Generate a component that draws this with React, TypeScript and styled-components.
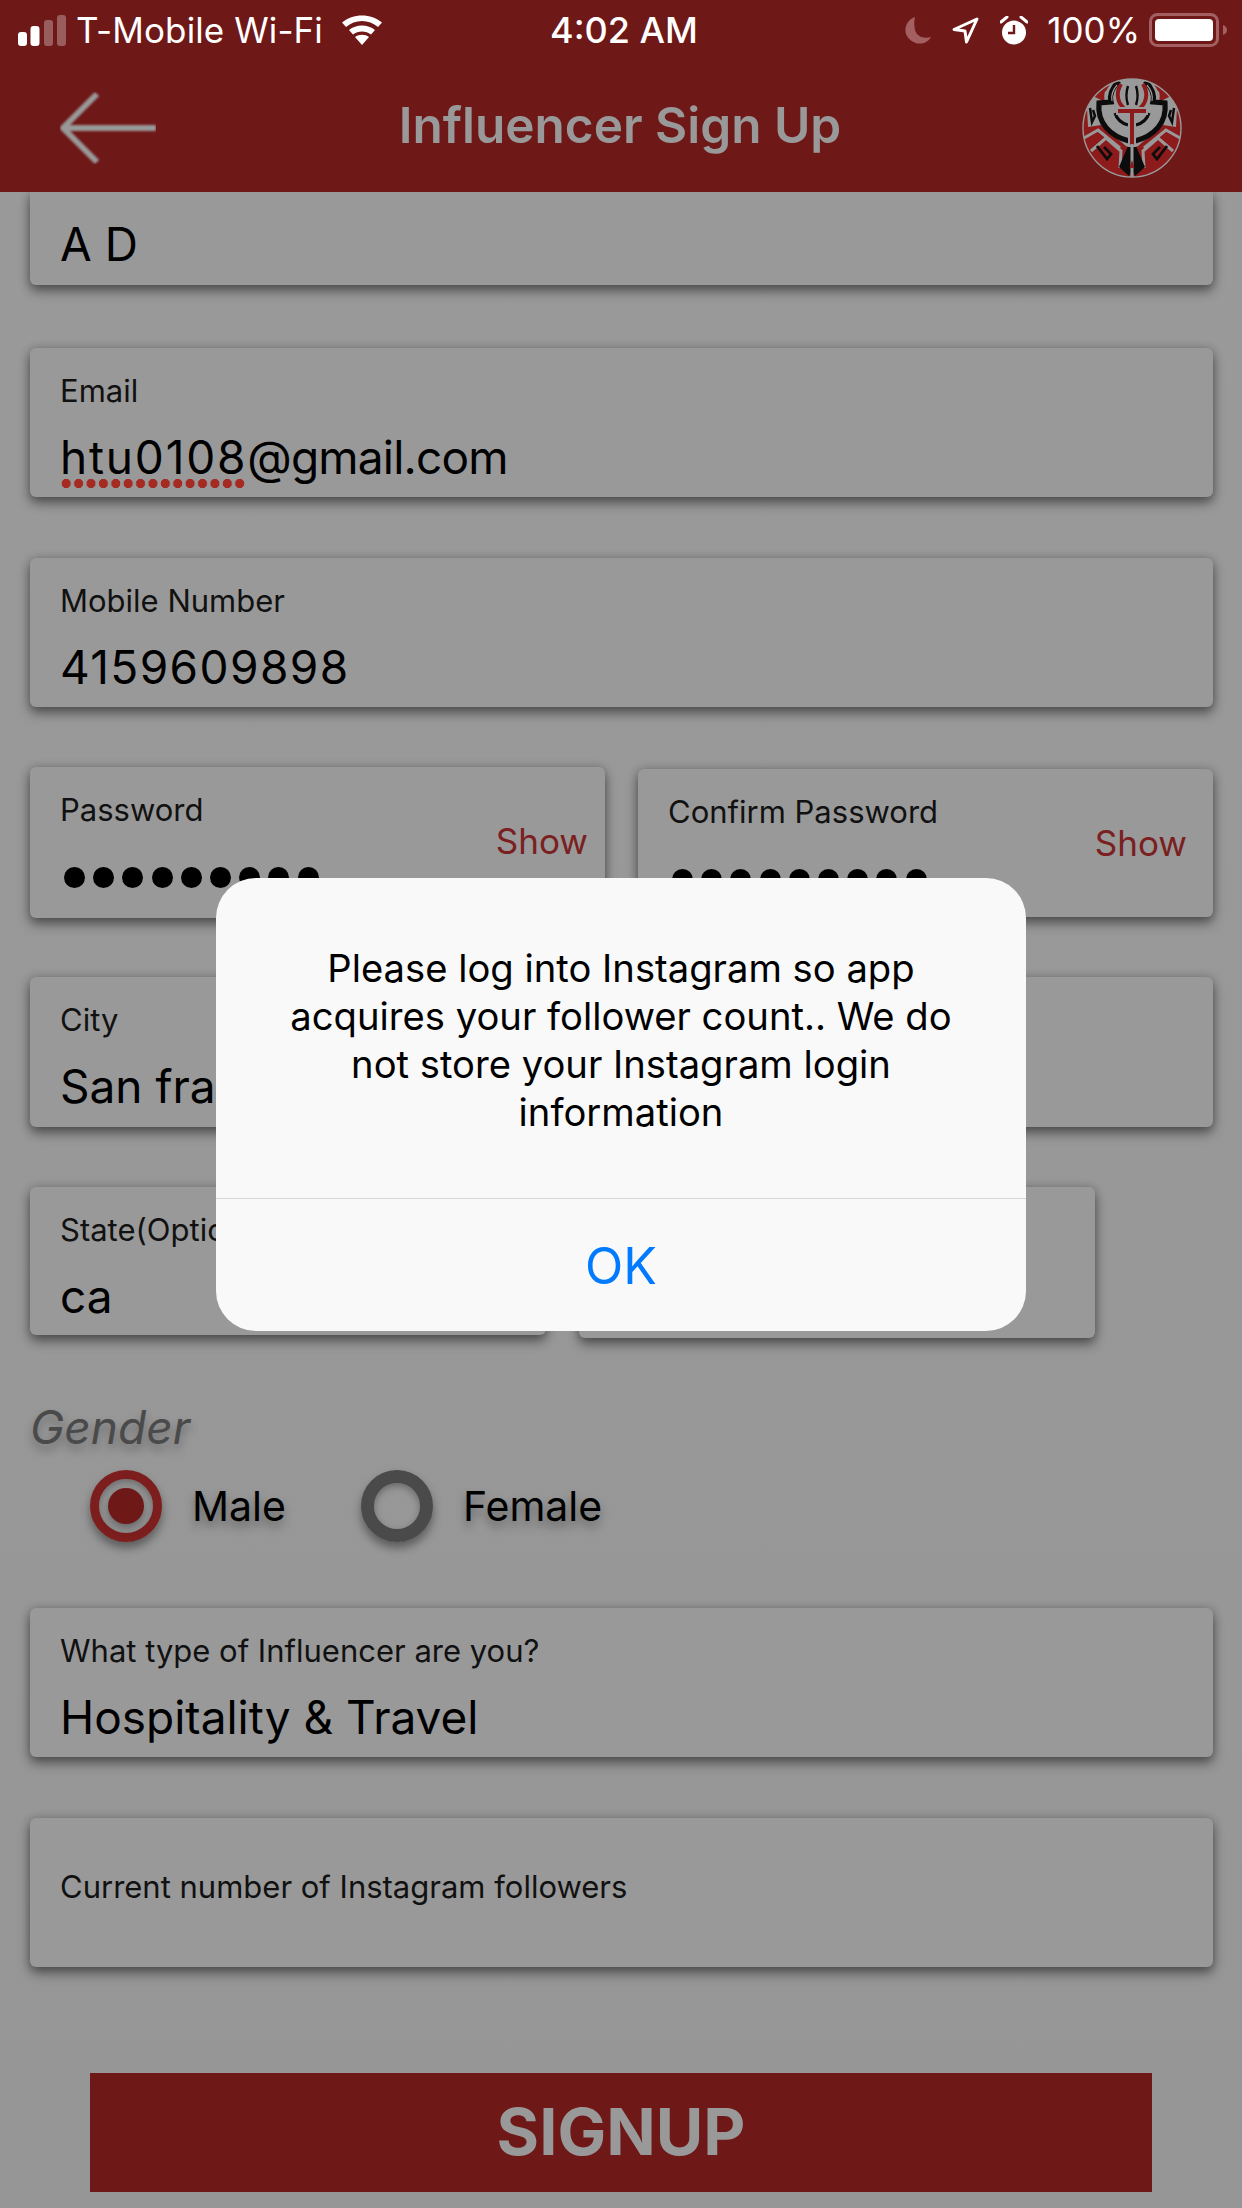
import React from "react";
import styled, { createGlobalStyle } from "styled-components";

const Global = createGlobalStyle`
  html, body { margin: 0; padding: 0; background: #979797; }
  * { box-sizing: border-box; }
`;

const Page = styled.div`
  position: relative;
  width: 1242px;
  height: 2208px;
  overflow: hidden;
  background: linear-gradient(#9a9a9a, #969696);
  font-family: Inter, "Noto Sans", "Liberation Sans", sans-serif;
  color: #000;
  display: flex;
  flex-direction: column;
`;

const Header = styled.header`
  position: relative;
  z-index: 2;
  height: 192px;
  flex: none;
  background: #6f1818;
  display: flex;
  flex-direction: column;
`;

const StatusBar = styled.div`
  height: 60px;
  flex: none;
  display: grid;
  grid-template-columns: 1fr auto 1fr;
  align-items: center;
  color: #fff;
  font-size: 35px;
`;

const StatusLeft = styled.div`
  display: flex;
  align-items: center;
  padding-left: 18px;
`;

const StatusRight = styled.div`
  display: flex;
  align-items: center;
  justify-content: flex-end;
  padding-right: 15px;
`;

const Carrier = styled.span`
  margin-left: 10px;
  letter-spacing: 0.1px;
`;

const Clock = styled.span`
  font-weight: 500;
  font-size: 36px;
  margin-left: 6px;
`;

const Battery = styled.span`
  margin: 0 9px 0 19px;
`;

const NavBar = styled.div`
  flex: 1;
  display: flex;
  align-items: center;
  justify-content: space-between;
  padding: 4px 60px 0 60px;
`;

const Title = styled.h1`
  margin: 0 0 6px 2px;
  font-size: 49.5px;
  font-weight: 600;
  color: #999;
`;

const Form = styled.main`
  flex: 1;
  display: flex;
  flex-direction: column;
  padding: 0 29px 0 30px;
`;

const Row = styled.div<{ $top: number }>`
  display: flex;
  gap: 33px;
  margin-top: ${(p) => p.$top}px;
`;

const Card = styled.div<{ $h?: number; $w?: number; $first?: boolean; $pr?: number; $mt?: number }>`
  flex: ${(p) => (p.$w ? "none" : "1")};
  width: ${(p) => (p.$w ? `${p.$w}px` : "auto")};
  height: ${(p) => p.$h ?? 149}px;
  margin-top: ${(p) => p.$mt ?? 0}px;
  background: #999;
  border-radius: ${(p) => (p.$first ? "0 0 6px 6px" : "6px")};
  box-shadow: 0 6px 12px rgba(0, 0, 0, 0.45), 0 0 10px rgba(0, 0, 0, 0.18);
  padding: 0 ${(p) => p.$pr ?? 30}px 0 30px;
  display: flex;
  align-items: center;
  justify-content: space-between;
`;

const FieldBody = styled.div`
  display: flex;
  flex-direction: column;
  align-self: flex-start;
  padding-top: 24px;
`;

const Label = styled.label`
  font-size: 31px;
  line-height: 38px;
  color: #111;
  white-space: nowrap;
`;

const Value = styled.div<{ $track?: number; $flush?: boolean }>`
  font-size: 46px;
  line-height: 56px;
  margin-top: ${(p) => (p.$flush ? 0 : 19)}px;
  letter-spacing: ${(p) => p.$track ?? 0}px;
  white-space: nowrap;
`;

const Misspelled = styled.span`
  position: relative;
  letter-spacing: 1.8px;
  &::after {
    content: "";
    position: absolute;
    left: 0;
    right: 0;
    bottom: -3px;
    height: 9px;
    background: radial-gradient(circle at center, #a52a22 4.4px, transparent 4.9px) repeat-x 0 0 / 12.4px 9px;
  }
`;

const Dots = styled.div`
  display: flex;
  gap: 8.2px;
  margin: 38px 0 0 4px;
`;

const Dot = styled.i`
  display: block;
  width: 21px;
  height: 21px;
  border-radius: 50%;
  background: #000;
`;

const ShowLink = styled.span<{ $lift?: number }>`
  font-size: 35px;
  color: #7a2020;
  margin-bottom: ${(p) => p.$lift ?? 0}px;
`;

const HelpLabel = styled(Label)`
  align-self: center;
  margin-bottom: 12px;
`;

const GenderTitle = styled.div`
  margin-top: 61px;
  font-size: 46px;
  line-height: 56px;
  font-style: italic;
  color: #4a4a4a;
  text-shadow: 0 6px 10px rgba(0, 0, 0, 0.3);
`;

const GenderRow = styled.div`
  display: flex;
  align-items: center;
  margin: 15px 0 0 60px;
`;

const Radio = styled.span<{ $on?: boolean }>`
  width: 72px;
  height: 72px;
  flex: none;
  border-radius: 50%;
  border: ${(p) => (p.$on ? "9px solid #7c1e1e" : "13px solid #4a4a4a")};
  box-shadow: 0 6px 10px rgba(0, 0, 0, 0.4), inset 0 3px 7px rgba(0, 0, 0, 0.3);
  display: flex;
  align-items: center;
  justify-content: center;
  &::after {
    content: "";
    display: ${(p) => (p.$on ? "block" : "none")};
    width: 36px;
    height: 36px;
    border-radius: 50%;
    background: #6f1818;
    box-shadow: 0 4px 8px rgba(0, 0, 0, 0.35);
  }
`;

const RadioText = styled.span<{ $gap?: number }>`
  font-size: 41px;
  margin: 0 ${(p) => p.$gap ?? 0}px 0 30px;
  text-shadow: 0 6px 10px rgba(0, 0, 0, 0.35);
`;

const SignupButton = styled.button`
  flex: none;
  width: 1062px;
  height: 119px;
  margin: 106px 0 0 60px;
  border: 0;
  padding: 0 0 3px;
  background: #6f1818;
  color: #999;
  font-family: inherit;
  font-size: 65px;
  font-weight: 700;
`;

const Overlay = styled.div`
  position: absolute;
  inset: 0;
  z-index: 3;
  display: flex;
  align-items: center;
  justify-content: center;
`;

const Alert = styled.div`
  width: 810px;
  height: 453px;
  border-radius: 40px;
  background: #f9f9f9;
  display: flex;
  flex-direction: column;
`;

const Message = styled.p`
  flex: none;
  height: 321px;
  margin: 0;
  padding: 66px 60px 0;
  text-align: center;
  font-size: 38.2px;
  line-height: 48px;
  color: #000;
  border-bottom: 1px solid #d6d6d6;
`;

const OkButton = styled.button`
  flex: 1;
  border: 0;
  background: transparent;
  color: #007aff;
  font-family: inherit;
  font-size: 50px;
  padding: 2px 0 0;
`;

const Icon = styled.svg<{ $ml?: number }>`
  display: block;
  flex: none;
  margin-left: ${(p) => p.$ml ?? 0}px;
`;

const SignalIcon = () => (
  <Icon width="48" height="32" viewBox="0 0 48 32">
    <rect x="0" y="18" width="9" height="14" rx="3" fill="#fff" />
    <rect x="12.5" y="12" width="9" height="20" rx="3" fill="#fff" />
    <rect x="26" y="6" width="9" height="26" rx="3" fill="#fff" fillOpacity=".3" />
    <rect x="39" y="1" width="9" height="31" rx="3" fill="#fff" fillOpacity=".3" />
  </Icon>
);

const WifiIcon = () => (
  <Icon $ml={19} width="40" height="30" viewBox="0 0 40 30">
    <path d="M20 30l-7-8c4-3 10-3 14 0z" fill="#fff" />
    <path d="M7 15l4 4.5c5-4 13-4 18 0l4-4.5C26 9 14 9 7 15z" fill="#fff" />
    <path d="M0 7.5l4 4.5C13 4 27 4 36 12l4-4.5C29-2 11-2 0 7.5z" fill="#fff" />
  </Icon>
);

const MoonIcon = () => (
  <Icon width="27" height="27" viewBox="0 0 27 27">
    <path d="M10 0C2 3-1 11 1 17c3 8 13 12 20 8 2-1 4-3 5-5-7 2-14 0-16-7C9 8 9 4 10 0z" fill="#a45f61" />
  </Icon>
);

const LocationIcon = () => (
  <Icon $ml={20} width="27" height="27" viewBox="0 0 27 27">
    <path d="M25 2L2 12.5l11 1.5 1.5 11z" fill="none" stroke="#fff" strokeWidth="3" strokeLinejoin="round" />
  </Icon>
);

const AlarmIcon = () => (
  <Icon $ml={21} width="28" height="29" viewBox="0 0 28 29">
    <circle cx="14" cy="16.5" r="12" fill="#fff" />
    <path d="M14 9v8H8" fill="none" stroke="#6f1818" strokeWidth="2.4" />
    <path d="M1 6l6-5M27 6l-6-5" stroke="#fff" strokeWidth="3" strokeLinecap="round" />
  </Icon>
);

const BatteryIcon = () => (
  <Icon width="78" height="34" viewBox="0 0 78 34">
    <rect x="1.5" y="1.5" width="67" height="31" rx="7" fill="none" stroke="#a45f61" strokeWidth="3" />
    <rect x="6" y="6" width="58" height="22" rx="4" fill="#fff" />
    <path d="M74 12c3 1 4 3 4 5s-1 4-4 5z" fill="#a45f61" />
  </Icon>
);

const BackArrow = () => (
  <Icon width="96" height="72" viewBox="0 0 96 72">
    <path
      d="M96 36H3M37 2L3 36l34 34"
      fill="none"
      stroke="#999"
      strokeWidth="6"
      strokeLinejoin="round"
      style={{ filter: "blur(0.8px)" }}
    />
  </Icon>
);

const LOGO_RED = "#8e1b1b";
const LOGO_GREY = "#999";
const LOGO_BLACK = "#0c0c0c";

const LogoHalf = () => (
  <g fill="none">
    <path d="M50 0L30 3 24 13 10 20 5 30 6 49 19 47 44 68 50 72z" fill={LOGO_GREY} />
    <path d="M30 4C21 7 15 11 11 18L23 24C21 16 23 10 30 4z" fill={LOGO_RED} />
    <path d="M37 3C30 10 27 16 29 24L17 25C15 45 28 58 47 63" stroke={LOGO_BLACK} strokeWidth="5.2" />
    <path d="M35 7C30 13 29 18 30 23" stroke={LOGO_GREY} strokeWidth="1.2" />
    <path d="M33 35C35 42 39 45 46 47" stroke={LOGO_BLACK} strokeWidth="3" />
    <path d="M39 6C33 16 36 26 43 31" stroke={LOGO_RED} strokeWidth="4" />
    <path d="M8 30L10 44 13 38 11 32" stroke={LOGO_BLACK} strokeWidth="2.5" />
    <path d="M2 60L16 52 38 70" stroke={LOGO_GREY} strokeWidth="3" />
    <path d="M9 73L24 60 39 73 38 90" stroke={LOGO_GREY} strokeWidth="3" />
    <path d="M15 68L25 81 29 76 22 69" stroke={LOGO_BLACK} strokeWidth="2.8" />
    <path d="M46 68L37 89 47 98 50 92V68z" fill={LOGO_BLACK} />
  </g>
);

const Logo = () => (
  <Icon width="100" height="100" viewBox="0 0 100 100">
    <defs>
      <clipPath id="logo-disc">
        <circle cx="50" cy="50" r="49" />
      </clipPath>
    </defs>
    <circle cx="50" cy="50" r="49" fill={LOGO_RED} />
    <g clipPath="url(#logo-disc)">
      <LogoHalf />
      <g transform="translate(100 0) scale(-1 1)">
        <LogoHalf />
      </g>
      <path d="M50 1c-11 8-11 20-6 30h12c5-10 5-22-6-30z" fill={LOGO_GREY} />
      <path d="M46 8c-2 6-2 13 0 19M54 8c2 6 2 13 0 19" stroke={LOGO_BLACK} strokeWidth="2.4" fill="none" />
      <path d="M34 29h32v8H54v32h-8V37H34z" fill={LOGO_GREY} />
      <path d="M36 31h28v4H52v32h-4V35H36z" fill={LOGO_RED} />
      <path d="M50 66v33" stroke={LOGO_GREY} strokeWidth="3" />
      <path d="M50 82l-2.5 8h5z" fill={LOGO_RED} />
    </g>
    <circle cx="50" cy="50" r="49" fill="none" stroke={LOGO_GREY} strokeWidth="1.4" />
  </Icon>
);

const PasswordDots = () => (
  <Dots>
    {Array.from({ length: 9 }, (_, i) => (
      <Dot key={i} />
    ))}
  </Dots>
);

export default function App() {
  return (
    <Page>
      <Global />
      <Header>
        <StatusBar>
          <StatusLeft>
            <SignalIcon />
            <Carrier>T-Mobile Wi-Fi</Carrier>
            <WifiIcon />
          </StatusLeft>
          <Clock>4:02 AM</Clock>
          <StatusRight>
            <MoonIcon />
            <LocationIcon />
            <AlarmIcon />
            <Battery>100%</Battery>
            <BatteryIcon />
          </StatusRight>
        </StatusBar>
        <NavBar>
          <BackArrow />
          <Title>Influencer Sign Up</Title>
          <Logo />
        </NavBar>
      </Header>
      <Form>
        <Row $top={0}>
          <Card $first $h={93}>
            <FieldBody>
              <Value $flush>A D</Value>
            </FieldBody>
          </Card>
        </Row>
        <Row $top={63}>
          <Card>
            <FieldBody>
              <Label>Email</Label>
              <Value $track={-0.8}>
                <Misspelled>htu0108</Misspelled>@gmail.com
              </Value>
            </FieldBody>
          </Card>
        </Row>
        <Row $top={61}>
          <Card>
            <FieldBody>
              <Label>Mobile Number</Label>
              <Value $track={1.4}>4159609898</Value>
            </FieldBody>
          </Card>
        </Row>
        <Row $top={60}>
          <Card $w={575} $h={151} $pr={17}>
            <FieldBody>
              <Label>Password</Label>
              <PasswordDots />
            </FieldBody>
            <ShowLink $lift={3}>Show</ShowLink>
          </Card>
          <Card $w={575} $h={148} $pr={26} $mt={2}>
            <FieldBody>
              <Label>Confirm Password</Label>
              <PasswordDots />
            </FieldBody>
            <ShowLink>Show</ShowLink>
          </Card>
        </Row>
        <Row $top={59}>
          <Card $h={150}>
            <FieldBody>
              <Label>City</Label>
              <Value>San francisco</Value>
            </FieldBody>
          </Card>
        </Row>
        <Row $top={60}>
          <Card $w={516} $h={148}>
            <FieldBody>
              <Label>State(Optional)</Label>
              <Value>ca</Value>
            </FieldBody>
          </Card>
          <Card $w={516} $h={151} />
        </Row>
        <GenderTitle>Gender</GenderTitle>
        <GenderRow>
          <Radio $on />
          <RadioText $gap={75}>Male</RadioText>
          <Radio />
          <RadioText>Female</RadioText>
        </GenderRow>
        <Row $top={66}>
          <Card>
            <FieldBody>
              <Label>What type of Influencer are you?</Label>
              <Value>Hospitality &amp; Travel</Value>
            </FieldBody>
          </Card>
        </Row>
        <Row $top={61}>
          <Card>
            <HelpLabel>Current number of Instagram followers</HelpLabel>
          </Card>
        </Row>
        <SignupButton>SIGNUP</SignupButton>
      </Form>
      <Overlay>
        <Alert>
          <Message>
            Please log into Instagram so app acquires your follower count.. We do not store your Instagram login information
          </Message>
          <OkButton>OK</OkButton>
        </Alert>
      </Overlay>
    </Page>
  );
}
